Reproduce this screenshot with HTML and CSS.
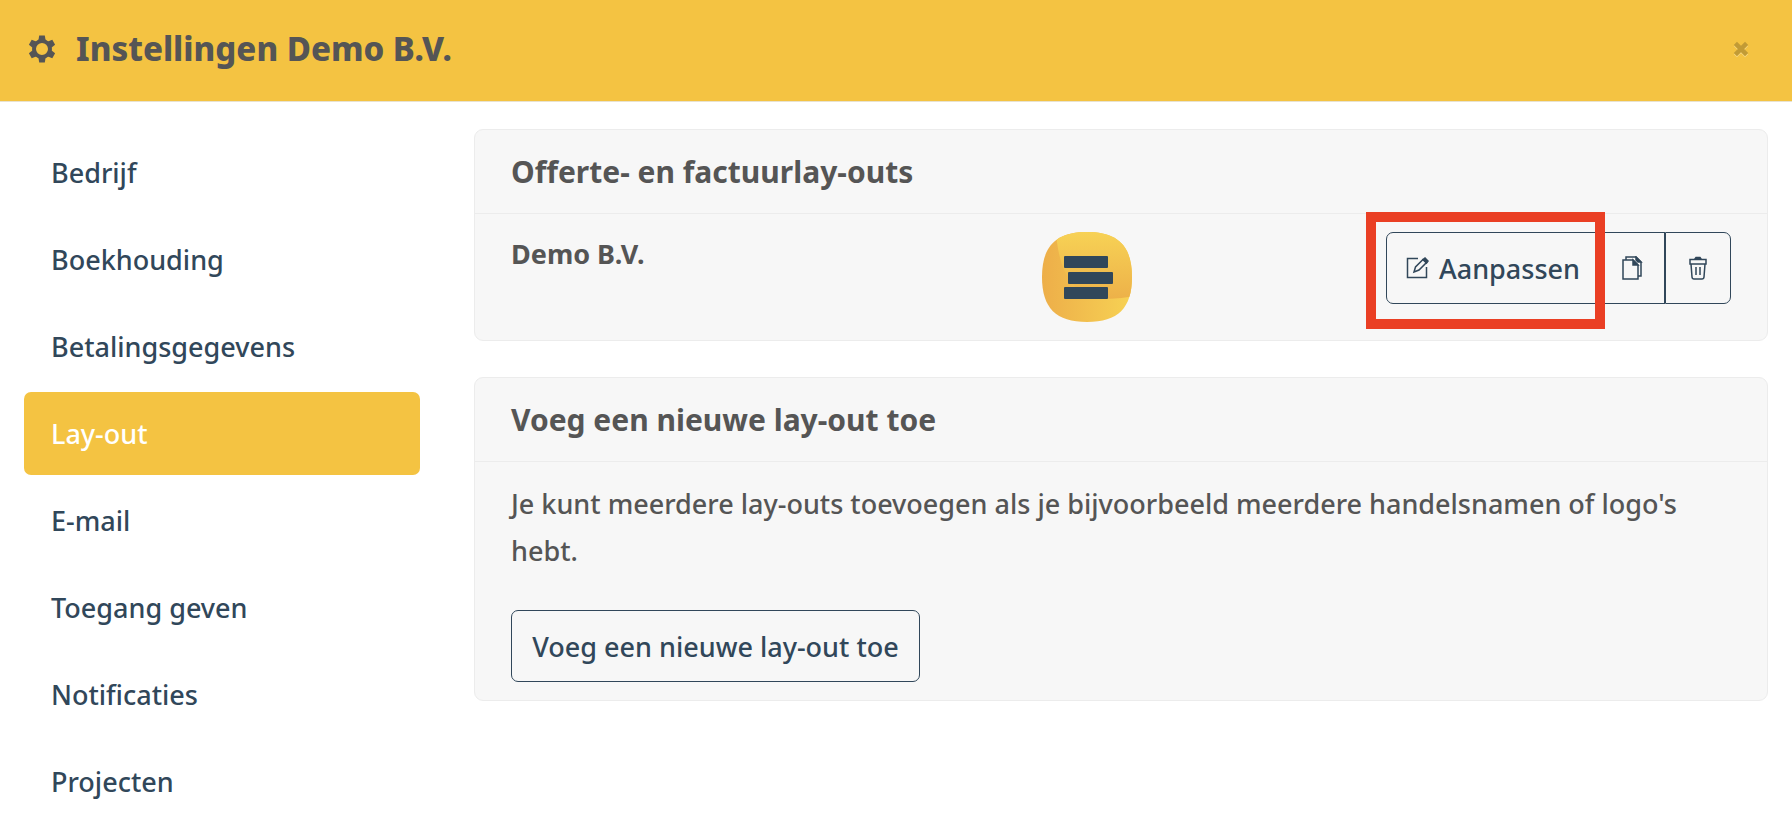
FILE: index.html
```html
<!DOCTYPE html>
<html lang="nl">
<head>
<meta charset="utf-8">
<meta name="viewport" content="width=device-width, initial-scale=1">
<title>Instellingen Demo B.V.</title>
<link rel="stylesheet" href="styles.css">
</head>
<body>
<header class="header">
  <svg class="gear" viewBox="-14 -14 28 28" aria-hidden="true">
    <circle r="8" fill="none" stroke="#555" stroke-width="4"/>
    <g id="teeth">
      <path id="tooth" d="M-2.800-13.500h5.600l1 6h-7.600z"/>
      <use href="#tooth" transform="rotate(60)"/>
      <use href="#tooth" transform="rotate(120)"/>
      <use href="#tooth" transform="rotate(180)"/>
      <use href="#tooth" transform="rotate(240)"/>
      <use href="#tooth" transform="rotate(300)"/>
    </g>
  </svg>
  <h1 class="title">Instellingen Demo B.V.</h1>
  <button class="close" type="button" aria-label="Sluiten">
    <svg class="close-icon" viewBox="0 0 16 16" aria-hidden="true"><path class="close-shade" d="M3 4l10 10M13 4L3 14"/><path d="M3 3l10 10M13 3L3 13"/></svg>
  </button>
</header>
<div class="layout">
  <nav class="nav">
    <a class="nav-link" href="#bedrijf">Bedrijf</a>
    <a class="nav-link" href="#boekhouding">Boekhouding</a>
    <a class="nav-link" href="#betalingsgegevens">Betalingsgegevens</a>
    <a class="nav-link active" href="#lay-out" aria-current="page">Lay-out</a>
    <a class="nav-link" href="#e-mail">E-mail</a>
    <a class="nav-link" href="#toegang">Toegang geven</a>
    <a class="nav-link" href="#notificaties">Notificaties</a>
    <a class="nav-link" href="#projecten">Projecten</a>
  </nav>
  <main class="content">
    <section class="card">
      <h2 class="card-title">Offerte- en factuurlay-outs</h2>
      <div class="card-body row">
        <strong class="name">Demo B.V.</strong>
        <svg class="logo" viewBox="0 0 90 90" role="img" aria-label="Logo">
          <defs>
            <linearGradient id="base" x1="0" x2="1" y1="0" y2="0"><stop offset="0" stop-color="#edae49"/><stop offset="1" stop-color="#f7d254"/></linearGradient>
            <linearGradient id="sheet" x1="0" x2="0" y1="0" y2="1"><stop offset="0" stop-color="#f7d255"/><stop offset="1" stop-color="#edb149"/></linearGradient>
            <clipPath id="shape"><path d="M45 0C76 0 90 14 90 45S76 90 45 90 0 76 0 45 14 0 45 0z"/></clipPath>
          </defs>
          <g clip-path="url(#shape)">
            <path fill="url(#base)" d="M0 0h90v90H0z"/>
            <path fill="url(#sheet)" d="M14 0h76v64.500q-20 4-39 .5Q21 57 15 10z"/>
          </g>
          <g fill="#31475a"><rect x="22" y="24" width="44" height="12" rx="1"/><rect x="26" y="40" width="45" height="12" rx="1"/><rect x="22" y="55" width="44" height="12" rx="1"/></g>
        </svg>
        <div class="group">
          <div class="marked">
            <button class="btn edit" type="button">
              <svg class="icon" viewBox="0 0 24 24" aria-hidden="true"><path d="M13 2.500H2.500v19h19V11"/><path d="M9 16l1.500-5L18 3.500l3.500 3L14 14z"/><path class="solid" d="M18 3.500L20 2l3 3-1.500 2z"/></svg>
              <span>Aanpassen</span>
            </button>
            <span class="marker"></span>
          </div>
          <button class="btn tool" type="button" aria-label="Kopiëren">
            <svg class="icon" viewBox="0 0 24 24" aria-hidden="true"><path d="M6 4V1h10l5 5v14h-3"/><path d="M3 4h10l5 5v14H3z"/><path class="solid" d="M13 4v5h5zM16 1v3l2 2h3z"/></svg>
          </button>
          <button class="btn tool" type="button" aria-label="Verwijderen">
            <svg class="icon" viewBox="0 0 24 24" aria-hidden="true"><path d="M4 3.500h16V8H4zM5 8l1 13q.2 2 2 2h8q1.800 0 2-2l1-13M10 11v8M14 11v8"/><path class="solid" d="M9 3l1-1.500h4L15 3z"/></svg>
          </button>
        </div>
      </div>
    </section>
    <section class="card">
      <h2 class="card-title">Voeg een nieuwe lay-out toe</h2>
      <div class="card-body">
        <p class="text">Je kunt meerdere lay-outs toevoegen als je bijvoorbeeld meerdere handelsnamen of logo's hebt.</p>
        <button class="btn add" type="button">Voeg een nieuwe lay-out toe</button>
      </div>
    </section>
  </main>
</div>
</body>
</html>
```
FILE: styles.css
```css
* { box-sizing: border-box; }
body {
  margin: 0;
  background: #fff;
  color: #555;
  font: 500 27px/47px "Noto Sans", "Open Sans", sans-serif;
}
.header {
  display: flex;
  align-items: center;
  min-height: 102px;
  padding: 0 42px 4px 28px;
  background: #f4c342;
  border-bottom: 1px solid #e8e2d0;
}
.gear { width: 28px; height: 28px; margin-right: 20px; fill: #555; }
.title { margin: 0; font-size: 33px; font-weight: 800; }
.close {
  display: flex;
  margin-left: auto;
  padding: 0;
  border: 0;
  background: none;
}
.close-icon { width: 18px; height: 18px; fill: none; stroke: #c29b35; stroke-width: 4; }
.close-shade { stroke: #f8d984; }
.layout {
  display: grid;
  grid-template-columns: 396fr 1294fr;
  gap: 54px;
  padding: 27px 24px;
}
.nav { display: flex; flex-direction: column; gap: 4px; padding-top: 2px; }
.nav-link {
  padding: 18px 27px;
  border-radius: 7px;
  color: #31475a;
  text-decoration: none;
}
.nav-link.active { background: #f4c342; color: #fff; }
.content { display: flex; flex-direction: column; gap: 36px; }
.card { background: #f7f7f7; border: 1px solid #ececec; border-radius: 9px; }
.card-title {
  margin: 0;
  padding: 18px 36px;
  border-bottom: 1px solid #ececec;
  font-size: 30px;
  font-weight: 700;
}
.card-body { padding: 18px 36px; }
.row { display: grid; grid-template-columns: 532fr 344fr auto; align-items: start; }
.name { font-weight: 700; line-height: 44px; }
.logo { width: 90px; height: 90px; }
.group { display: flex; }
.marked { position: relative; display: flex; }
.marker {
  position: absolute;
  inset: -20px -6px -25px -20px;
  border: 10px solid #ea3f24;
  pointer-events: none;
}
.btn {
  display: flex;
  align-items: center;
  justify-content: center;
  height: 72px;
  padding: 0 16px;
  border: 1px solid #31475a;
  border-radius: 7px;
  background: none;
  color: #31475a;
  font: inherit;
}
.edit { gap: 10px; min-width: 213px; border-radius: 7px 0 0 7px; }
.add { min-width: 409px; }
.tool { width: 66px; border-radius: 0; }
.tool:last-child { border-radius: 0 7px 7px 0; }
.icon { width: 24px; height: 24px; flex: none; fill: none; stroke: #31475a; stroke-width: 1.5; }
.solid { fill: #31475a; }
.text { margin: 0 0 36px; padding-right: 36px; }
```
